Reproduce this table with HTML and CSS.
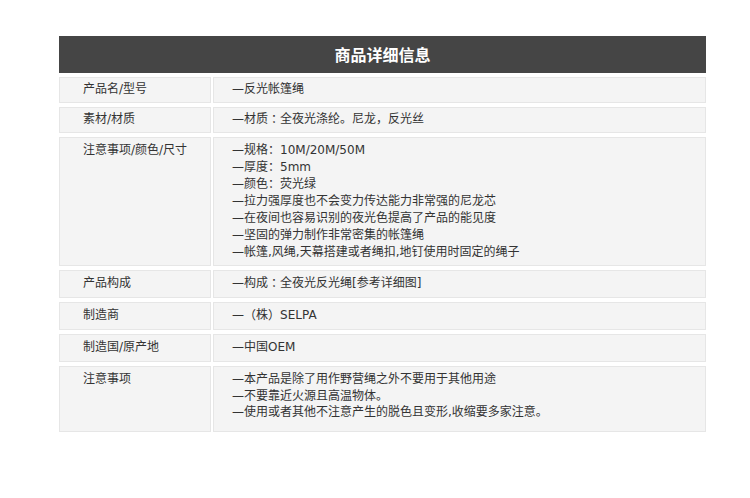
FILE: index.html
```html
<!DOCTYPE html>
<html lang="zh-CN">
<head>
<meta charset="utf-8">
<link rel="stylesheet" href="styles.css">
</head>
<body>
<div class="sheet">
  <div class="title">商品详细信息</div>
  <div class="table">
    <div class="cell label one">产品名/型号</div>
    <div class="cell value one">—反光帐篷绳</div>

    <div class="cell label one">素材/材质</div>
    <div class="cell value one">—材质<span class="colon">：</span>全夜光涤纶。尼龙，反光丝</div>

    <div class="cell label multi r3">注意事项/颜色/尺寸</div>
    <div class="cell value multi r3">
      <div>—规格<span class="colon">：</span>10M/20M/50M</div>
      <div>—厚度<span class="colon">：</span>5mm</div>
      <div>—颜色<span class="colon">：</span>荧光绿</div>
      <div>—拉力强厚度也不会变力传达能力非常强的尼龙芯</div>
      <div>—在夜间也容易识别的夜光色提高了产品的能见度</div>
      <div>—坚固的弹力制作非常密集的帐篷绳</div>
      <div>—帐篷,风绳,天幕搭建或者绳扣,地钉使用时固定的绳子</div>
    </div>

    <div class="cell label one">产品构成</div>
    <div class="cell value one">—构成<span class="colon">：</span>全夜光反光绳[参考详细图]</div>

    <div class="cell label one">制造商</div>
    <div class="cell value one">—<span class="colon">（</span>株<span class="colon">）</span>SELPA</div>

    <div class="cell label one">制造国/原产地</div>
    <div class="cell value one">—中国OEM</div>

    <div class="cell label multi r7">注意事项</div>
    <div class="cell value multi r7">
      <div>—本产品是除了用作野营绳之外不要用于其他用途</div>
      <div>—不要靠近火源且高温物体。</div>
      <div>—使用或者其他不注意产生的脱色且变形,收缩要多家注意。</div>
    </div>
  </div>
</div>
</body>
</html>
```

FILE: styles.css
```css
html, body {
  margin: 0;
  padding: 0;
  background: #ffffff;
}

body {
  font-family: "DejaVu Sans", "Noto Sans CJK SC", sans-serif;
  font-size: 12px;
  color: #333333;
}

.sheet {
  width: 647px;
  margin: 36px 0 0 59px;
}

.title {
  height: 37px;
  background: #454545;
  color: #ffffff;
  font-family: "Noto Sans CJK SC", sans-serif;
  font-size: 16px;
  font-weight: bold;
  line-height: 37px;
  text-align: center;
}

.table {
  margin-top: 4px;
  display: grid;
  grid-template-columns: 152px 1fr;
  grid-template-rows: 26px 26px 129px 28px 28px 28px 66px;
  column-gap: 2px;
  row-gap: 4px;
}

.cell {
  box-sizing: border-box;
  background: #f4f4f4;
  border: 1px solid #e6e6e6;
  line-height: 17px;
}

.label {
  padding-left: 23px;
}

.value {
  padding-left: 18px;
}

.one {
  display: flex;
  align-items: center;
  padding-bottom: 2px;
}

.multi {
  padding-top: 4px;
}

.r7 {
  line-height: 16.5px;
}

.colon {
  font-family: "Noto Sans CJK TC", sans-serif;
  line-height: 1;
}
```
